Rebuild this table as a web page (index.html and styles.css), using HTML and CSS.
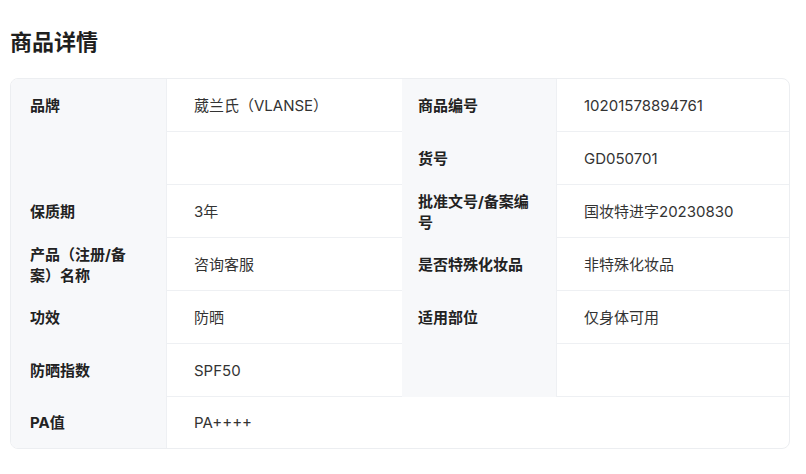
FILE: index.html
```html
<!DOCTYPE html>
<html lang="zh-CN">
<head>
<meta charset="utf-8">
<title>商品详情</title>
<link rel="stylesheet" href="styles.css">
</head>
<body>
<section class="detail">
  <h2 class="detail-title">商品详情</h2>
  <div class="spec-card">
    <div class="cell label l1">品牌</div>
    <div class="cell value v1">葳兰氏（VLANSE）</div>
    <div class="cell label l2">商品编号</div>
    <div class="cell value v2">10201578894761</div>

    <div class="cell label l1"></div>
    <div class="cell value v1"></div>
    <div class="cell label l2">货号</div>
    <div class="cell value v2">GD050701</div>

    <div class="cell label l1">保质期</div>
    <div class="cell value v1">3年</div>
    <div class="cell label l2">批准文号/备案编号</div>
    <div class="cell value v2">国妆特进字20230830</div>

    <div class="cell label l1">产品（注册/备案）名称</div>
    <div class="cell value v1">咨询客服</div>
    <div class="cell label l2">是否特殊化妆品</div>
    <div class="cell value v2">非特殊化妆品</div>

    <div class="cell label l1">功效</div>
    <div class="cell value v1">防晒</div>
    <div class="cell label l2">适用部位</div>
    <div class="cell value v2">仅身体可用</div>

    <div class="cell label l1">防晒指数</div>
    <div class="cell value v1">SPF50</div>
    <div class="cell label l2"></div>
    <div class="cell value v2"></div>

    <div class="cell label l1 last">PA值</div>
    <div class="cell value wide last">PA++++</div>
  </div>
</section>
</body>
</html>
```

FILE: styles.css
```css
html, body {
  margin: 0;
  padding: 0;
  background: #ffffff;
}

body {
  font-family: "Inter", "Noto Sans CJK SC", sans-serif;
  color: #222;
}

.detail {
  padding: 27px 16px 0 10px;
}

.detail-title {
  margin: 0 0 21px 0;
  font-size: 22px;
  line-height: 30px;
  font-weight: 700;
  color: #1f1f1f;
}

.spec-card {
  display: grid;
  grid-template-columns: 156px 235px 155px 1fr;
  grid-template-rows: repeat(6, 53px) 51px;
  border: 1px solid #eceef1;
  border-radius: 8px;
  overflow: hidden;
  width: 778px;
}

.cell {
  display: flex;
  align-items: center;
  font-size: 15px;
  line-height: 21px;
  box-sizing: border-box;
}

.label {
  background: #f7f8fa;
  font-weight: 700;
  color: #222;
  border-right: 1px solid #eef0f3;
}

.label.l1 {
  padding: 0 24px 0 19px;
}

.label.l2 {
  padding: 0 14px 0 16px;
}

.value {
  color: #333;
  border-bottom: 1px solid #eef0f3;
}

.value.v1,
.value.v2 {
  padding: 0 16px 0 27px;
}

.value.wide {
  grid-column: 2 / 5;
  padding: 0 16px 0 27px;
  border-bottom: none;
}
```
